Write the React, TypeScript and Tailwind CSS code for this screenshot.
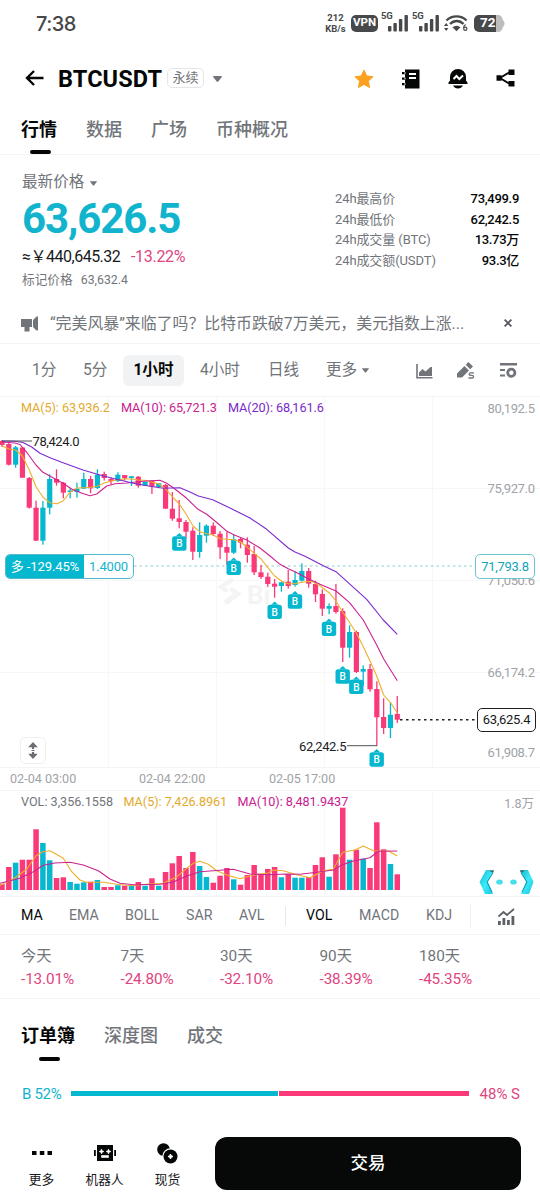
import type { ReactNode } from "react";

const UP = "#06b8cf";
const DOWN = "#fa3a78";
const STEP = 6.815;

const candleX = (i: number) => 2 + i * STEP;

// [high, body top, body bottom, low, rising]
const candles: [number, number, number, number, number][] = [
  [440, 441, 445, 447, 0], [443, 444, 464.7, 465.5, 0], [446, 447.3, 464.7, 467.7, 1],
  [447, 447.5, 477.7, 478, 0], [477, 478, 507.7, 508.5, 0], [500.7, 507.7, 540.7, 541, 0],
  [501, 507.7, 540.7, 544.7, 1], [474.3, 479, 507.7, 514.3, 1], [469.3, 479, 482.7, 485.7, 0],
  [482, 482.7, 492.7, 498.3, 0], [488.3, 490.5, 492, 498.3, 1], [482.7, 488.7, 492, 497.7, 1],
  [472.7, 479, 488.7, 489, 1], [476, 479, 488.3, 493.3, 0], [469.3, 474.7, 488, 489, 1],
  [471.7, 474, 478, 480.5, 0], [477.5, 479, 481.3, 484.5, 0], [472.3, 474.7, 481, 482, 1],
  [475, 475, 478.3, 480.5, 0], [476, 476.3, 478, 486, 1], [476, 476.7, 485.7, 487.7, 0],
  [481.5, 481.7, 485.7, 486, 1], [480, 480.7, 486.7, 494, 0], [483, 483.3, 487, 488, 1],
  [484, 485, 508.7, 509, 0], [492, 508.7, 518.7, 520.7, 0], [500, 518.3, 522, 528.3, 0],
  [520, 522, 531.7, 538.3, 0], [527.3, 530.7, 551.7, 560, 0], [522.3, 535, 552, 557.7, 1],
  [524.3, 525.7, 535.7, 542.7, 1], [522.3, 525.7, 534, 536, 0], [531, 533.7, 547.3, 559, 0],
  [531.7, 547, 552.7, 565, 0], [534.3, 539.3, 552.7, 554, 1], [537.7, 539, 542.7, 548.3, 0],
  [537.3, 544.7, 555, 562.7, 0], [546, 554, 572.3, 575, 0], [565, 572.3, 577, 579, 0],
  [572.7, 576.7, 584, 586.7, 0], [579, 583.7, 586.7, 597.7, 0], [582, 582.3, 586, 591.7, 1],
  [570, 581.7, 586, 588.7, 0], [571, 580, 585, 586.7, 1], [563.3, 571, 580.7, 581.7, 1],
  [568, 571, 583.7, 587.7, 0], [580.7, 584, 594.3, 602, 0], [589.3, 594, 608.7, 616, 0],
  [603.3, 606, 608.7, 614.3, 1], [584, 606, 612, 613.7, 0], [608.3, 611, 647.7, 662, 0],
  [625.3, 632, 647.7, 657.7, 1], [630.7, 632, 672, 673, 0], [665.3, 669, 671.7, 686, 1],
  [664, 669, 689.3, 691.7, 0], [681.3, 689, 717.3, 746, 0], [698.3, 717, 728, 734, 0],
  [702.3, 714.7, 728, 738, 1], [696, 714, 719.7, 723, 0],
];

const volumes = [
  5.7, 23, 27.3, 30.3, 30.3, 60.7, 47, 29.7, 12, 12.7, 8, 6.3, 7.7, 8.3, 10, 3, 3, 4.7, 4.3, 4.7,
  8, 4.3, 11.7, 4.3, 18, 26.7, 34, 22, 38, 24, 13, 7.3, 14.3, 22, 10.7, 5.3, 15, 25, 15, 21,
  23, 12.7, 16, 12.3, 12.3, 13, 25, 32.7, 13.3, 35.7, 82.3, 30.3, 40.3, 31.3, 22, 67.7, 40.7, 26, 15.7,
];

const ma5 =
  "2,446 9,449 15.7,450 22.4,456 29.3,470 36,486.7 43,497.3 50,502.7 57,503.7 63,501 70,492.3 77,488 84,487.7 91,487.3 98,486 104,483 111,481 118,479.7 125,479 132,479 138,480 145,480.3 152,482 159,484 165.7,489 172.3,496.7 179.3,504 186,514 193,526 199.7,531.7 206.7,533.7 213.3,535 220,538.7 227,539.3 233.7,539.7 240.3,541.7 247.3,547.3 254.3,553.3 261,559 267.7,567.3 274.7,576 281.7,581.3 288.3,583.7 295,583.7 302,582.3 311.7,581.3 320,585.7 329,592.7 336,601 342.7,612.3 349.3,622 356.3,633 363.3,646.7 370,661 376.7,676 383.7,695 390.3,702.3 397.3,713";
const ma10 =
  "2,442 15,443 20,444.5 27,452.7 36,465 43,472.3 53,477.7 63,483.3 72,489.3 82,493.3 90,495.7 96.7,494 106.7,486 115,483.7 127,483 143,481.3 160,480.3 166.7,483.3 173.3,487.7 186.7,498.3 198,509.3 206.7,514.3 215,521 227,531.3 233.7,534.7 246.7,540 260,548 270,556 280,564.3 288.3,568.7 295,571.7 308.7,579 320,584.3 336,591 349.3,602.3 363.3,620 376.7,645 383.7,659 397.3,680.7";
const ma20 =
  "2,441 15,441.3 23,442.5 31.7,447 40,453.3 50,457.7 61.7,462.3 83,470 103.3,476 116.7,479.3 133.3,483.3 150,486.3 163.3,488.3 180,487.7 190,492 198.3,496 212.7,499.7 230,508 250,518 266.7,529.3 288.3,548 295,552 305,556.3 323.3,565.7 336,571.7 349.3,583.7 366.7,599.3 383.3,620 397.3,634.3";
const volMa5 =
  "0,885.3 13.3,879 26.7,869.3 36,855.7 43,851.7 50,850.7 63.3,858.3 71.7,871.7 80,880 86.7,882.3 103.3,882.3 116.7,884.3 130,885.7 146.7,884.3 163.3,883.3 176.7,876.7 186.7,868.3 193.3,863.3 200,861.3 208.3,864.3 216.7,870.7 226.7,875 240,878.7 253.3,875 268,873 273.3,870 283.3,870.7 296.7,874.7 310,877.7 323.3,870.7 333.3,869.3 342.7,852.3 355,850 363.3,846 373.3,850.7 388.3,851 397.3,856";
const volMa10 =
  "0,883.3 20,878.3 33.3,871.7 43.3,865.3 55,863 70,862.3 83.3,865 98.3,870.7 110,879 120,883.3 133.3,884.7 160,884.3 173.3,882 186.7,876 200,871.7 213.3,870.7 233.3,869.3 250,874 268,874.7 286.7,874 300,874.3 316.7,872.3 333.3,870 341.7,865 353.3,861 370,857.7 378.3,851.3 397.3,851";

// buy markers, [center x, top of the box]
const buys = [
  [179.3, 536.3], [233.7, 560.7], [274.7, 604.7], [295, 594.3],
  [329, 621.7], [342.7, 669.3], [356.3, 679.7], [376.7, 752.3],
];

const priceAxis: [string, number][] = [
  ["80,192.5", 412.5], ["75,927.0", 492.5], ["71,050.6", 585], ["66,174.2", 676.5], ["61,908.7", 756.5],
];

function Caret({ className }: { className?: string }) {
  return (
    <svg viewBox="0 0 9 6" className={className} fill="#71757a">
      <path d="M0.6 0h7.8c.5 0 .7.5.4.9L5.3 5.4c-.4.5-1.2.5-1.6 0L.2.9C-.1.5.1 0 .6 0z" />
    </svg>
  );
}

function Signal() {
  return (
    <div className="relative w-[28px] h-[18px]">
      <span className="absolute left-0 -top-[3px] text-[9.5px] leading-[10px] font-bold tracking-[-0.1px]">5G</span>
      <svg viewBox="0 0 28 18" className="w-[28px] h-[18px]" fill="#47484a">
        <rect x="7" y="12" width="3.4" height="5.5" rx="0.8" />
        <rect x="12.4" y="9" width="3.4" height="8.5" rx="0.8" />
        <rect x="17.9" y="5" width="3.4" height="12.5" rx="0.8" />
        <rect x="23.5" y="1" width="3.4" height="16.5" rx="0.8" />
      </svg>
    </div>
  );
}

function StatusBar() {
  return (
    <div className="flex h-12 items-center justify-between pl-[36px] pr-[35px] text-[#47484a]">
      <span className="text-[20px] font-medium font-['Inter','Roboto',sans-serif] tracking-[-0.5px]">7:38</span>
      <div className="flex items-center">
        <div className="-mt-[3px] mr-[4px] w-[23px] text-center text-[9.5px] leading-[11px] font-bold whitespace-nowrap">
          <div>212</div>
          <div>KB/s</div>
        </div>
        <div className="-mt-[2px] mr-[3px] flex h-[17px] w-[27px] items-center justify-center rounded-[5px] bg-[#47484a] text-[11.5px] leading-none font-bold text-white">
          VPN
        </div>
        <div className="-mt-[2px] mr-[3px]"><Signal /></div>
        <div className="-mt-[2px] mr-[4px]"><Signal /></div>
        <svg viewBox="0 0 24 18" className="-mt-[2px] mr-[6px] w-6 h-[18px]" fill="none" stroke="#47484a" strokeWidth="2.4">
          <path d="M2.5 6.5C8 1 17 1 22.5 6.5M6 10c4-4 9.500-4 13.500 0" />
          <path d="M8.500 13.200c2.500-2 5.500-2 8 0l-4 4z" fill="#47484a" stroke="none" />
          <path d="M0 12l2.200-3 2.200 3zM0 14l2.200 3 2.200-3z" fill="#47484a" stroke="none" />
          <path d="M21.600 10.500c-1.500 1-2 2.300-2 3.500" strokeWidth="1.200" />
          <circle cx="21.300" cy="14.700" r="1.600" strokeWidth="1.200" />
        </svg>
        <div className="relative -mt-[2px] flex h-[17px] w-[31px] items-center">
          <svg viewBox="0 0 31 17" className="absolute inset-0 w-[31px] h-[17px]">
            <path d="M21 0h3c3 0 4 2 4.500 4l2 3.500v2L28.500 13c-.5 2-1.500 4-4.500 4h-3z" fill="#bcbdbe" />
            <path d="M5 0h17v17H5a5 5 0 0 1-5-5V5a5 5 0 0 1 5-5z" fill="#47484a" />
          </svg>
          <span className="relative ml-[6px] text-[13.5px] font-bold leading-none text-white">72</span>
        </div>
      </div>
    </div>
  );
}

function Header() {
  return (
    <div className="flex h-[60px] items-center pl-[25px] pr-[25px]">
      <svg viewBox="0 0 19 16" className="w-[19px] h-4" fill="none" stroke="#050707" strokeWidth="2.400">
        <path d="M18.500 8H2M9 1L2 8l7 7" />
      </svg>
      <h1 className="mt-[3px] ml-[14px] w-[105px] whitespace-nowrap text-[23.5px] font-bold tracking-[0.1px] text-[#050707]">BTCUSDT</h1>
      <span className="ml-[4px] flex h-5 w-[37px] items-center justify-center rounded-[5px] border border-[#e4e6e8] text-[13px] text-[#71757a]">永续</span>
      <Caret className="ml-[9px] mt-px w-[9px] h-[6px]" />
      <div className="ml-auto flex items-center gap-[28px]">
        <svg viewBox="0 0 20 20" className="mt-px w-5 h-5" fill="#fba11f" stroke="#fba11f" strokeWidth="1" strokeLinejoin="round">
          <path d="M10 1l2.700 5.900 6.300.8-4.600 4.400 1.200 6.400L10 15.400l-5.600 3.100 1.200-6.400L1 7.700l6.300-.8z" />
        </svg>
        <svg viewBox="0 0 18 20" className="mt-px w-[18px] h-5">
          <path d="M3 .5h14.500v19H3zM0 3h4v2.200H0zM0 8.500h4v2.200H0zM0 14h4v2.200H0z" fill="#050707" />
          <path d="M3 3.200v1.700M3 8.700v1.700M3 14.200v1.700" stroke="#fff" strokeWidth="1" />
          <path d="M7 5h7M7 9h7" stroke="#fff" strokeWidth="2" />
        </svg>
        <svg viewBox="0 0 20 20" className="mt-px w-5 h-5">
          <path d="M10 0a8 8 0 0 1 8 8v3.500l1.500 2V15H.5v-1.500l1.500-2V8a8 8 0 0 1 8-8zM5 16.500h10c-1 2-3 3-5 3s-4-1-5-3z" fill="#050707" />
          <path d="M5.500 10l3-3 2.800 3L15 6.500" fill="none" stroke="#fff" strokeWidth="2" />
        </svg>
        <svg viewBox="0 0 19 18" className="w-[19px] h-[18px]">
          <path d="M13 3.500L4 9l9 5.500" fill="none" stroke="#050707" strokeWidth="2" />
          <path d="M12.500.5h6v5.500h-6zM12.500 12h6v5.500h-6zM.5 6.200h5v5.500h-5z" fill="#050707" />
        </svg>
      </div>
    </div>
  );
}

function PriceSummary() {
  const rows = [
    ["24h最高价", "73,499.9"],
    ["24h最低价", "62,242.5"],
    ["24h成交量 (BTC)", "13.73万"],
    ["24h成交额(USDT)", "93.3亿"],
  ];
  return (
    <div className="flex h-[148px] justify-between pl-[22px] pr-[21px] text-[#71757a]">
      <div className="whitespace-nowrap pt-[17px]">
        <div className="flex h-[22px] items-center text-[15.6px]">
          最新价格
          <Caret className="ml-[6px] w-[7px] h-[5px]" />
        </div>
        <div className="h-[50px] text-[42px] leading-[49px] font-bold tracking-[-1.1px] text-[#12b4cd]">63,626.5</div>
        <div className="flex h-[25px] items-center text-[16px] tracking-[-0.3px] text-[#17191b]">
          <span className="w-[109px] tracking-[-0.5px]">≈￥440,645.32</span>
          <span className="text-[#df4480]">-13.22%</span>
        </div>
        <div className="flex h-[22px] items-center text-[12.7px]">
          标记价格<span className="ml-[8px] text-[12.3px]">63,632.4</span>
        </div>
      </div>
      <div className="w-[184px] pt-[34px] text-[13px] leading-[20.5px]">
        {rows.map(([label, value]) => (
          <div key={label} className="flex h-[20.5px] justify-between whitespace-nowrap">
            <span className="tracking-[-0.1px]">{label}</span>
            <span className="font-medium tracking-[-0.3px] text-[#050707]">{value}</span>
          </div>
        ))}
      </div>
    </div>
  );
}

function News() {
  return (
    <div className="flex h-[41px] items-center border-b border-[#f3f4f5] pl-[21px] pr-[28px] text-[#71757a]">
      <svg viewBox="0 0 18 16" className="mt-[2px] w-[18px] h-4" fill="#71757a">
        <path d="M0 3h11v8H8.500v4.500h-5V11H0zM12 4l3.500-3.500H17v14h-1.500L12 11z" />
      </svg>
      <span className="mt-[2px] ml-[11px] whitespace-nowrap text-[15.9px]">“完美风暴”来临了吗？比特币跌破7万美元，美元指数上涨...</span>
      <svg viewBox="0 0 8 8" className="ml-auto w-2 h-2" stroke="#55585c" strokeWidth="1.800">
        <path d="M.6.6l6.800 6.800M7.400.6L.6 7.400" />
      </svg>
    </div>
  );
}

function Timeframes() {
  return (
    <div className="flex h-[53px] items-center border-b border-[#f3f4f5] pl-[32px] pr-[23px] pt-px text-[15.6px] text-[#71757a] whitespace-nowrap">
      <span className="w-[51px]">1分</span>
      <span className="w-[40px]">5分</span>
      <span className="flex h-[31px] w-[61px] items-center justify-center rounded-md bg-[#f0f2f4] font-bold text-[#050707]">1小时</span>
      <span className="ml-[16px] w-[68px]">4小时</span>
      <span className="w-[58px]">日线</span>
      <span>更多</span>
      <Caret className="ml-[5px] w-[7px] h-[5px]" />
      <div className="ml-auto flex items-center">
        <svg viewBox="0 0 17 16" className="w-[17px] h-4" fill="#71757a">
          <path d="M1 1v13.800h15.500" fill="none" stroke="#71757a" strokeWidth="1.600" />
          <path d="M3 13V9.500L6.500 6l3 2.500 5-4.500H16v9z" />
        </svg>
        <svg viewBox="0 0 18 17" className="ml-[24px] w-[18px] h-[17px]" fill="#71757a">
          <path d="M0 15.500v-4L7.500 4 12 8.500 5 15.500zM8.700 2.800L11.500 0 16 4.500 13.200 7.300z" />
          <path d="M17 10.800h-3.500c-1.800 0-1.800 2.500 0 2.500h1.700c1.800 0 1.800 2.700 0 2.700H11.500" fill="none" stroke="#71757a" strokeWidth="1.300" />
        </svg>
        <svg viewBox="0 0 17 17" className="ml-[25px] w-[17px] h-[17px]" fill="#71757a">
          <path d="M0 1h17v2.400H0zM0 7h5v2H0zM0 12.500h5v2H0z" />
          <circle cx="11.300" cy="10.700" r="3.600" fill="none" stroke="#71757a" strokeWidth="2.800" />
        </svg>
      </div>
    </div>
  );
}

function Grid({ top, bottom }: { top: number; bottom: number }) {
  return (
    <g stroke="#f7f7f8" strokeWidth="1">
      {[108, 216, 324, 432].map((x) => (
        <line key={x} x1={x + 0.5} x2={x + 0.5} y1={top} y2={bottom} />
      ))}
    </g>
  );
}

function PriceChart() {
  return (
    <div className="relative h-[370px]">
      <svg viewBox="0 397 540 370" className="block w-[540px] h-[370px]">
        <Grid top={397} bottom={767} />
        <g stroke="#f7f7f8">
          {[488.5, 580.5, 672.5].map((y) => (
            <line key={y} x1="0" x2="540" y1={y} y2={y} />
          ))}
        </g>

        {/* watermark */}
        <g fill="#f3f4f4">
          <path d="M232 577l-15 10 9 6 3-3-4-3 9-6zM229 589l3-2 10 7-15 11-4-4 10-7z" />
          <text x="247" y="604" fontSize="26" fontWeight="700">Bi</text>
        </g>

        {priceAxis.map(([label, y]) => (
          <text key={label} x="535" y={y} textAnchor="end" fontSize="13" textLength="47.5" fill="#a0a3a7">{label}</text>
        ))}

        <line x1="134" x2="475" y1="566" y2="566" stroke="#8ccbd3" strokeWidth="1.2" strokeDasharray="2.500 3" />
        <line x1="400" x2="477" y1="719.7" y2="719.7" stroke="#202224" strokeWidth="1.500" strokeDasharray="2.500 3.500" />

        {candles.map(([high, top, bottom, low, up], i) => (
          <g key={i} fill={up ? UP : DOWN}>
            <rect x={candleX(i) - 0.65} y={high} width="1.3" height={low - high} />
            <rect x={candleX(i) - 2.6} y={top} width="5.2" height={bottom - top} />
          </g>
        ))}

        <g fill="none" strokeWidth="1.1" strokeLinejoin="round">
          <polyline points={ma5} stroke="#edb02c" />
          <polyline points={ma10} stroke="#cc2390" />
          <polyline points={ma20} stroke="#7d2ad0" />
        </g>

        <path d="M2 441h30M347 745.700h30" stroke="#505356" strokeWidth="1" />
        <text x="32.500" y="445.500" fontSize="13" textLength="47" fill="#202224">78,424.0</text>
        <text x="299" y="750.500" fontSize="13" textLength="47.500" fill="#202224">62,242.5</text>

        {buys.map(([x, y]) => (
          <g key={x}>
            <path d={`M${x - 3.5} ${y}L${x} ${y - 3.3}L${x + 3.5} ${y}z`} fill={UP} />
            <rect x={x - 7.2} y={y} width="14.4" height="14.400" rx="2.5" fill={UP} />
            <text x={x} y={y + 10.8} textAnchor="middle" fontSize="10" fontWeight="500" fill="#fff">B</text>
          </g>
        ))}
      </svg>

      <div className="absolute left-[21px] top-[3px] flex text-[12.7px] leading-4 whitespace-nowrap tracking-[-0.1px]">
        <span className="w-[100px] text-[#e3aa2d]">MA(5): 63,936.2</span>
        <span className="w-[107px] text-[#c9218e]">MA(10): 65,721.3</span>
        <span className="text-[#7a2acb]">MA(20): 68,161.6</span>
      </div>

      <div className="absolute left-[5px] top-[157px] flex h-[25px] w-[129px] items-center overflow-hidden rounded-[5px] border border-[#4fbccb] bg-white text-[13px] whitespace-nowrap">
        <span className="flex h-full w-[78px] items-center justify-center bg-[#06b8cf] tracking-[-0.1px] text-white">多 -129.45%</span>
        <span className="flex-1 text-center tracking-[-0.2px] text-[#12b4cd]">1.4000</span>
      </div>
      <div className="absolute right-[5px] top-[157px] flex h-[25px] w-[60px] items-center justify-center rounded-[5px] border border-[#6cc4d0] bg-white text-[13px] tracking-[-0.3px] text-[#12a3b9]">71,793.8</div>
      <div className="absolute right-[4px] top-[311px] flex h-[24px] w-[59px] items-center justify-center rounded-[5px] border border-[#202224] bg-white text-[13px] tracking-[-0.3px] text-[#17191b]">63,625.4</div>

      <div className="absolute left-[20px] top-[340px] flex h-[27px] w-[26px] items-center justify-center rounded-[5px] border border-[#eff0f1] bg-white">
        <svg viewBox="0 0 10 17" className="w-[10px] h-[17px]" fill="#6a6d71">
          <path d="M5 0l4.800 5.200H6.100V7H3.900V5.200H.2zM5 17l4.800-5.200H6.100V10H3.900v1.800H.2zM3.500 7.900h3v1.200h-3z" />
        </svg>
      </div>
    </div>
  );
}

function VolumeChart() {
  return (
    <div className="relative h-[105px]">
      <svg viewBox="0 791 540 105" className="block w-[540px] h-[105px]">
        <Grid top={791} bottom={896} />
        {volumes.map((h, i) => (
          <rect key={i} x={candleX(i) - 2.75} y={890 - h} width="5.5" height={h} fill={candles[i][4] ? UP : DOWN} />
        ))}
        <g fill="none" strokeWidth="1.1" strokeLinejoin="round">
          <polyline points={volMa5} stroke="#edb02c" />
          <polyline points={volMa10} stroke="#cc2390" />
        </g>
        <text x="534" y="808" textAnchor="end" fontSize="12.500" fill="#a0a3a7">1.8万</text>

        {/* floating assistant */}
        <defs>
          <linearGradient id="bot" x1="0" y1="0" x2="1" y2="1">
            <stop offset="0" stopColor="#12b5cd" />
            <stop offset="0.5" stopColor="#3ceaf8" />
            <stop offset="1" stopColor="#1ac3e6" />
          </linearGradient>
        </defs>
        <path d="M486 870h8l-6 12 5 12h-8l-5.500-12z" fill="url(#bot)" />
        <path d="M528 870h-8l6 12-5 12h8l4.500-12z" fill="url(#bot)" />
        <path d="M489 870.500h5l-1 2.500zM525 870.500h-5l1 2.500z" fill="#46605a" />
        <path d="M493 873l-6 9 5 10M521 873l6 9-5 10" fill="none" stroke="#0a94a8" strokeWidth="1" />
        <ellipse cx="499.500" cy="882" rx="3.300" ry="2.600" fill="#45dfea" />
        <ellipse cx="513.500" cy="882" rx="3.300" ry="2.600" fill="#45dfea" />
      </svg>
      <div className="absolute left-[21px] top-[3px] flex text-[12.6px] leading-4 whitespace-nowrap">
        <span className="w-[102.500px] text-[#71757a]">VOL: 3,356.1558</span>
        <span className="w-[114px] text-[#e3aa2d]">MA(5): 7,426.8961</span>
        <span className="text-[#c9218e]">MA(10): 8,481.9437</span>
      </div>
    </div>
  );
}

function Indicators() {
  return (
    <div className="flex h-[39px] items-center border-y border-[#f3f4f5] pl-[21px] pr-[25px] pt-px text-[14.2px] text-[#71757a] whitespace-nowrap">
      <span className="w-[48px] text-[#050707]">MA</span>
      <span className="w-[56px]">EMA</span>
      <span className="w-[61px]">BOLL</span>
      <span className="w-[53px]">SAR</span>
      <span className="w-[46px]">AVL</span>
      <span className="h-5 w-px bg-[#e8eaeb]" />
      <span className="ml-[20px] w-[53px] text-[#050707]">VOL</span>
      <span className="w-[67px]">MACD</span>
      <span className="w-[44px]">KDJ</span>
      <span className="h-6 w-px bg-[#eeeff0]" />
      <svg viewBox="0 0 17 17" className="ml-auto w-[17px] h-[17px]" fill="#5d6165">
        <path d="M0 13h2.800v4H0zM4.500 10h2.800v7H4.500zM9 12h2.800v5H9zM13.500 8h2.800v9h-2.800z" />
        <path d="M.5 8.500L5.500 4l3.500 3 7-6" fill="none" stroke="#5d6165" strokeWidth="1.800" />
      </svg>
    </div>
  );
}

function Performance() {
  const stats = [
    ["今天", "-13.01%"],
    ["7天", "-24.80%"],
    ["30天", "-32.10%"],
    ["90天", "-38.39%"],
    ["180天", "-45.35%"],
  ];
  return (
    <div className="flex h-[64px] border-b border-[#f3f4f5] pl-[21px] pt-[10px]">
      {stats.map(([label, value]) => (
        <div key={label} className="w-[99.5px] text-[15.3px] leading-[22.5px]">
          <div className="text-[#71757a]">{label}</div>
          <div className="tracking-[-0.1px] text-[#df4480]">{value}</div>
        </div>
      ))}
    </div>
  );
}

function Action({ label, children }: { label: string; children: ReactNode }) {
  return (
    <div className="flex w-[63px] flex-col items-center">
      <div className="flex h-[22px] items-center">{children}</div>
      <span className="mt-[8px] text-[12.7px] leading-4 text-[#17191b]">{label}</span>
    </div>
  );
}

function BottomBar() {
  return (
    <div className="flex h-[64px] pl-[10px] pr-[19px]">
      <div className="flex pt-[5px]">
        <Action label="更多">
          <svg viewBox="0 0 20 4" className="w-5 h-1" fill="#050707">
            <path d="M0 0h4.500v4H0zM7.800 0h4.500v4H7.800zM15.500 0H20v4h-4.500z" />
          </svg>
        </Action>
        <Action label="机器人">
          <svg viewBox="0 0 22 16" className="w-[22px] h-4">
            <path d="M3 0h16v16H3zM0 5h1.800v6H0zM20.200 5H22v6h-1.800z" fill="#050707" />
            <path d="M7.500 4l.7 1.800 1.800.7-1.800.7-.7 1.800-.7-1.800L5 6.500l1.800-.7zM14.500 4l.7 1.800 1.800.7-1.800.7-.7 1.800-.7-1.800-1.800-.7 1.800-.7zM7.500 10.500h7v2h-7z" fill="#fff" stroke="#fff" strokeWidth=".6" />
          </svg>
        </Action>
        <Action label="现货">
          <svg viewBox="0 0 21 21" className="w-[21px] h-[21px]">
            <circle cx="6.500" cy="6.500" r="6.300" fill="#050707" />
            <circle cx="13.500" cy="13.500" r="8.300" fill="#fff" />
            <circle cx="13.500" cy="13.500" r="7" fill="#050707" />
            <path d="M13.500 11l.8 1.700 1.700.8-1.700.8-.8 1.700-.8-1.700-1.700-.8 1.700-.8z" fill="#fff" stroke="#fff" />
          </svg>
        </Action>
      </div>
      <button className="ml-auto h-[53px] w-[306px] rounded-xl bg-[#070909] text-[17.500px] font-medium text-white">交易</button>
    </div>
  );
}

export default function App() {
  return (
    <div className="h-[1200px] w-[540px] overflow-hidden bg-white font-['Roboto','Noto_Sans_CJK_SC',sans-serif]">
      <StatusBar />
      <Header />

      <div className="flex h-[47px] items-start gap-[29px] border-b border-[#f3f4f5] pl-[21px] text-[18px] leading-6 font-medium text-[#71757a]">
        <div className="flex h-full flex-col items-center justify-between pt-[10px] font-bold text-[#050707]">
          行情
          <span className="ml-[3px] h-1 w-[21px] rounded-full bg-[#050707]" />
        </div>
        <span className="pt-[10px]">数据</span>
        <span className="pt-[10px]">广场</span>
        <span className="pt-[10px]">币种概况</span>
      </div>

      <PriceSummary />
      <News />
      <Timeframes />
      <PriceChart />

      <div className="flex h-[24px] items-center border-y border-[#f3f4f5] pl-[10px] text-[12.600px] text-[#a0a3a7]">
        <span className="w-[129px]">02-04 03:00</span>
        <span className="w-[130px]">02-04 22:00</span>
        <span>02-05 17:00</span>
      </div>

      <VolumeChart />
      <Indicators />
      <Performance />

      <div className="flex h-[62px] items-start gap-[29px] pl-[21px] pt-[25px] text-[18px] leading-6 font-medium text-[#71757a]">
        <div className="flex h-full flex-col items-center justify-between font-bold text-[#050707]">
          订单簿
          <span className="ml-[3px] h-1 w-[21px] rounded-full bg-[#050707]" />
        </div>
        <span>深度图</span>
        <span>成交</span>
      </div>

      <div className="mt-[20px] flex h-[26px] items-center pl-[22px] pr-[20px] text-[15px] whitespace-nowrap">
        <span className="w-[49px] tracking-[-0.3px] text-[#12b4cd]">B 52%</span>
        <div className="-mt-px flex h-[5px] w-[398px] gap-px">
          <div className="bg-[#06b8cf]" style={{ width: "52%" }} />
          <div className="flex-1 bg-[#fa3a78]" />
        </div>
        <span className="ml-auto text-[#df4480]">48% S</span>
      </div>

      <div className="mt-[30px]">
        <BottomBar />
      </div>
    </div>
  );
}
